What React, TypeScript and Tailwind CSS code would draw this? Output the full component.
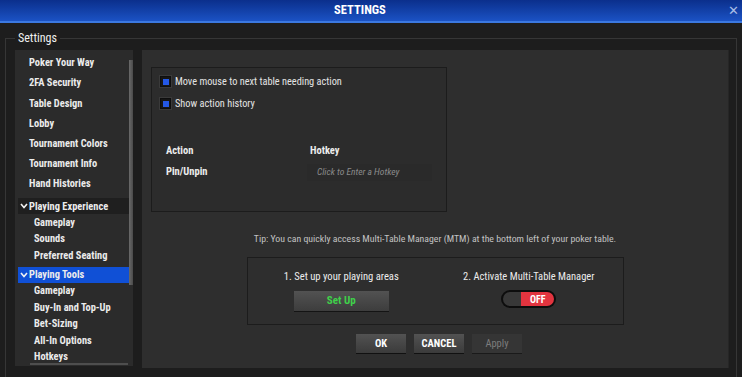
import React from 'react';

const font = { fontFamily: '"Roboto Condensed", "Liberation Sans Narrow", Roboto, sans-serif' };

const topItems = ['Poker Your Way', '2FA Security', 'Table Design', 'Lobby', 'Tournament Colors', 'Tournament Info', 'Hand Histories'];
const experience = ['Gameplay', 'Sounds', 'Preferred Seating'];
const tools = ['Gameplay', 'Buy-In and Top-Up', 'Bet-Sizing', 'All-In Options', 'Hotkeys'];

function Chevron() {
  return (
    <svg width="8" height="6" viewBox="0 0 8 6" className="mr-[1px]">
      <polyline points="1,1 4,4.5 7,1" fill="none" stroke="#f2f2f2" strokeWidth="1.6" />
    </svg>
  );
}

function Check({ label }: { label: string }) {
  return (
    <div className="flex items-center h-[17px] gap-[4px]">
      <div className="w-[11px] h-[11px] bg-[#161616] border border-[#0e0e0e] flex items-center justify-center shadow-[0_0_0_1px_#3a3a3a]">
        <div className="w-[6px] h-[6px] bg-[#2458e6]" />
      </div>
      <span className="text-[10.3px] text-[#e4e4e4] whitespace-nowrap">{label}</span>
    </div>
  );
}

function Btn({ label, disabled = false }: { label: string; disabled?: boolean }) {
  return (
    <div
      className={
        disabled
          ? 'w-[50px] h-[19px] flex items-center justify-center bg-[#353535] text-[#7c7c7c] text-[10.5px] shadow-[0_1px_0_#1a1a1a]'
          : 'w-[50px] h-[19px] flex items-center justify-center bg-gradient-to-b from-[#525252] to-[#3b3b3b] text-white font-bold text-[10.5px] shadow-[0_1px_0_#111]'
      }
    >
      {label}
    </div>
  );
}

export default function App() {
  return (
    <div className="w-[742px] h-[377px] bg-[#1d1d1d] flex flex-col overflow-hidden" style={font}>
      <div className="h-[23px] shrink-0 bg-gradient-to-b from-[#0b2f8c] to-[#1b52c4] border-b-2 border-[#3b78e0] flex items-center relative">
        <div className="flex-1 text-center text-white font-bold text-[12.5px] pr-[22px] leading-none">SETTINGS</div>
        <div className="absolute right-[3px] top-[4px] text-[#a9bde6] text-[13px] leading-none">✕</div>
      </div>

      <fieldset className="mt-[9px] mx-[5px] border border-[#363636] border-b-0 flex-1 pl-[9px] pr-[8px] pt-[6px] min-h-0">
        <legend className="px-[3px] text-[12px] leading-[12px] text-[#f0f0f0]">Settings</legend>
        <div className="flex gap-[9px] h-[318px]">
          <div className="w-[118px] h-[316px] bg-[#2b2b2b] flex flex-col shrink-0">
            <div className="flex flex-1 min-h-0">
              <div className="flex-1 pl-[3px] pt-[3px] text-[10.4px] text-[#ececec] font-bold whitespace-nowrap">
                {topItems.map((t) => (
                  <div key={t} className="h-[20.2px] flex items-center pl-[11px]">{t}</div>
                ))}
                <div className="mt-[4px] h-[16px] flex items-center pl-[2px] bg-[#1f1f1f]">
                  <Chevron />
                  Playing Experience
                </div>
                {experience.map((t) => (
                  <div key={t} className="h-[16.5px] flex items-center pl-[16px]">{t}</div>
                ))}
                <div className="mt-[3px] h-[16px] flex items-center pl-[2px] bg-[#1050d6]">
                  <Chevron />
                  Playing Tools
                </div>
                {tools.map((t) => (
                  <div key={t} className="h-[16.5px] flex items-center pl-[16px]">{t}</div>
                ))}
              </div>
              <div className="w-[4px] pt-[10px]">
                <div className="h-[225px] bg-gradient-to-r from-[#6a6a6a] to-[#4a4a4a]" />
              </div>
            </div>
            <div className="h-[2px] ml-[15px] mr-[5px] mb-[1px] bg-[#4e4e4e]" />
          </div>

          <div className="flex-1 h-[318px] bg-[#2e2e2e] flex flex-col items-center pt-[17px] shadow-[1px_0_0_#262626]">
            <div className="self-start ml-[9px] w-[296px] h-[145px] border border-[#1c1c1c] bg-[#2c2c2c] pl-[8px] pt-[5px] flex flex-col">
              <div className="flex flex-col gap-[5px]">
                <Check label="Move mouse to next table needing action" />
                <Check label="Show action history" />
              </div>
              <div className="mt-[30px] ml-[2px] flex flex-col gap-[3px] text-[10.5px]">
                <div className="flex h-[18px] items-center">
                  <div className="w-[144px] pl-[4px] font-bold text-[#ededed]">Action</div>
                  <div className="pl-[4px] font-bold text-[#ededed]">Hotkey</div>
                </div>
                <div className="flex h-[18px] items-center">
                  <div className="w-[145px] pl-[4px] font-bold text-[#ededed]">Pin/Unpin</div>
                  <div className="w-[125px] h-[17px] bg-[#2a2a2a] flex items-center pl-[10px] italic text-[#8a8a8a] text-[9.5px]">
                    Click to Enter a Hotkey
                  </div>
                </div>
              </div>
            </div>

            <div className="mt-[21px] h-[12px] flex items-center text-[9.8px] text-[#c2c2c2] whitespace-nowrap">
              Tip: You can quickly access Multi-Table Manager (MTM) at the bottom left of your poker table.
            </div>

            <div className="mt-[12px] w-[377px] h-[68px] border border-[#1c1c1c] grid grid-cols-2 pt-[13px]">
              <div className="flex flex-col items-center gap-[8px]">
                <div className="h-[12px] flex items-center text-[10.6px] text-[#ececec] whitespace-nowrap">1. Set up your playing areas</div>
                <div className="w-[95px] h-[20px] bg-gradient-to-b from-[#525252] to-[#3d3d3d] shadow-[0_1px_0_#141414] flex items-center justify-center text-[#3fd14a] text-[11px] font-bold">
                  Set Up
                </div>
              </div>
              <div className="flex flex-col items-center gap-[7px]">
                <div className="h-[12px] flex items-center text-[10.5px] text-[#ececec] whitespace-nowrap">2. Activate Multi-Table Manager</div>
                <div className="w-[55px] h-[18px] rounded-full bg-[#0d0d0d] p-[2px] flex">
                  <div className="w-[18px] rounded-l-full bg-[#383838]" />
                  <div className="flex-1 rounded-r-full bg-[#e2343f] flex items-center justify-center text-white font-bold text-[10px]">
                    OFF
                  </div>
                </div>
              </div>
            </div>

            <div className="mt-[9px] flex gap-[8px] pl-[8px]">
              <Btn label="OK" />
              <Btn label="CANCEL" />
              <Btn label="Apply" disabled />
            </div>
          </div>
        </div>
      </fieldset>
    </div>
  );
}
